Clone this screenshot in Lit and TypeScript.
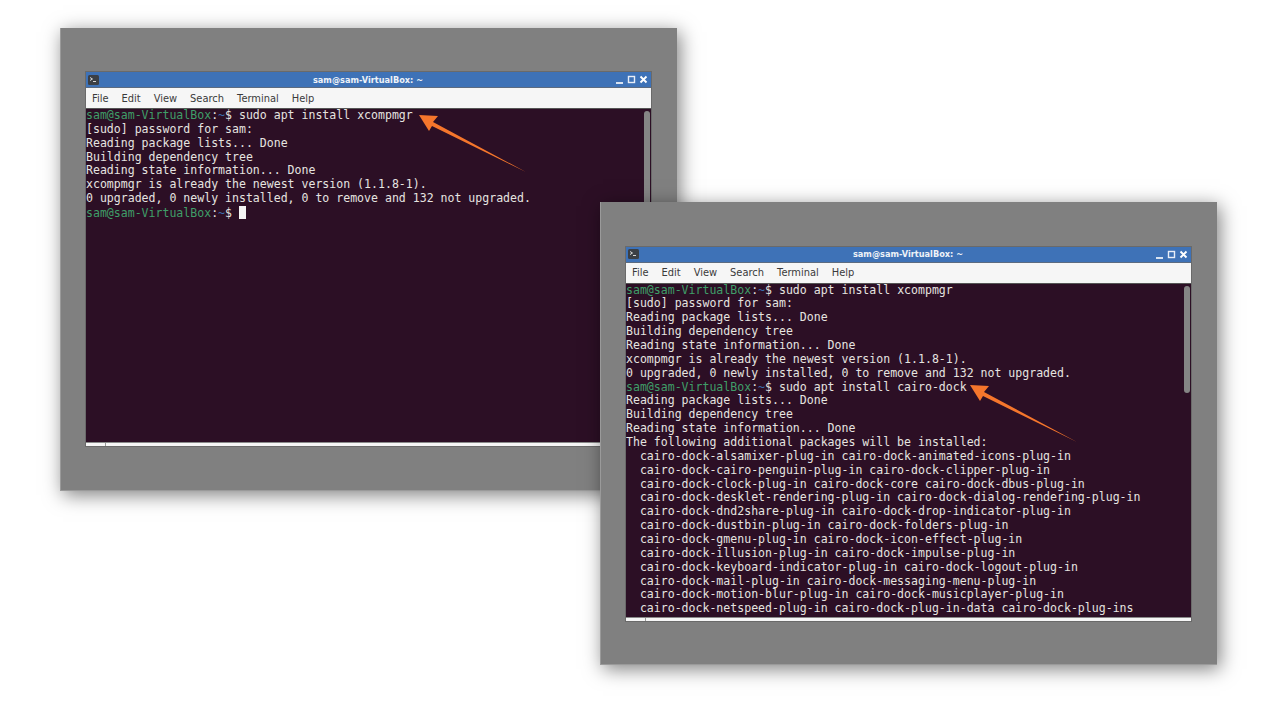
import { LitElement, html, css, svg } from "lit";
import { customElement, property } from "lit/decorators.js";

type Line = string | { cmd: string };

const LEFT: Line[] = [
  { cmd: "sudo apt install xcompmgr" },
  "[sudo] password for sam:",
  "Reading package lists... Done",
  "Building dependency tree",
  "Reading state information... Done",
  "xcompmgr is already the newest version (1.1.8-1).",
  "0 upgraded, 0 newly installed, 0 to remove and 132 not upgraded.",
  { cmd: "CURSOR" },
];

const RIGHT: Line[] = [
  { cmd: "sudo apt install xcompmgr" },
  "[sudo] password for sam:",
  "Reading package lists... Done",
  "Building dependency tree",
  "Reading state information... Done",
  "xcompmgr is already the newest version (1.1.8-1).",
  "0 upgraded, 0 newly installed, 0 to remove and 132 not upgraded.",
  { cmd: "sudo apt install cairo-dock" },
  "Reading package lists... Done",
  "Building dependency tree",
  "Reading state information... Done",
  "The following additional packages will be installed:",
  "  cairo-dock-alsamixer-plug-in cairo-dock-animated-icons-plug-in",
  "  cairo-dock-cairo-penguin-plug-in cairo-dock-clipper-plug-in",
  "  cairo-dock-clock-plug-in cairo-dock-core cairo-dock-dbus-plug-in",
  "  cairo-dock-desklet-rendering-plug-in cairo-dock-dialog-rendering-plug-in",
  "  cairo-dock-dnd2share-plug-in cairo-dock-drop-indicator-plug-in",
  "  cairo-dock-dustbin-plug-in cairo-dock-folders-plug-in",
  "  cairo-dock-gmenu-plug-in cairo-dock-icon-effect-plug-in",
  "  cairo-dock-illusion-plug-in cairo-dock-impulse-plug-in",
  "  cairo-dock-keyboard-indicator-plug-in cairo-dock-logout-plug-in",
  "  cairo-dock-mail-plug-in cairo-dock-messaging-menu-plug-in",
  "  cairo-dock-motion-blur-plug-in cairo-dock-musicplayer-plug-in",
  "  cairo-dock-netspeed-plug-in cairo-dock-plug-in-data cairo-dock-plug-ins",
];

const MENU = ["File", "Edit", "View", "Search", "Terminal", "Help"];

@customElement("term-window")
class TermWindow extends LitElement {
  @property({ attribute: false }) lines: Line[] = [];
  @property({ type: Number }) thumb = 100;

  static styles = css`
    :host {
      display: flex;
      flex-direction: column;
      width: 567px;
      height: 376px;
      box-sizing: border-box;
      border: 1px solid #6a6a6a;
      background: #f6f6f6;
    }
    .title {
      height: 15px;
      display: grid;
      grid-template-columns: 1fr auto 1fr;
      align-items: center;
      padding: 0 3px 0 2px;
      background: #3e72b7;
      color: #eef2f8;
      font: bold 8.2px "DejaVu Sans", sans-serif;
      border-bottom: 1px solid #5c6b80;
    }
    .title svg {
      display: block;
    }
    .controls {
      display: flex;
      gap: 3px;
      justify-content: flex-end;
    }
    .menu {
      height: 20px;
      display: flex;
      align-items: center;
      padding-left: 6px;
      gap: 13px;
      background: #f6f6f6;
      color: #3a3a3a;
      font: 9.9px "DejaVu Sans", sans-serif;
      border-bottom: 1px solid #555;
    }
    .term {
      position: relative;
      flex: 1;
      min-height: 0;
      overflow: hidden;
      background: #2c0f25;
      color: #e6e4e0;
      font: 11.55px/13.87px "DejaVu Sans Mono", monospace;
    }
    .line {
      height: 13.87px;
      white-space: pre;
    }
    .user {
      color: #3f9e68;
    }
    .path {
      color: #3a6db0;
    }
    .cursor {
      display: inline-block;
      width: 7px;
      height: 13px;
      background: #f4f4f4;
      vertical-align: -2px;
    }
    .thumb {
      position: absolute;
      top: 2px;
      right: 1px;
      width: 6px;
      border-radius: 3px;
      background: #858585;
    }
    .bottom {
      height: 3px;
      display: flex;
      background: #f6f6f6;
      border-top: 1px solid #8a8a8a;
    }
    .grip {
      width: 19px;
      border-right: 1px solid #9a9a9a;
    }
  `;

  private icon() {
    return html`<svg width="11" height="10" viewBox="0 0 11 10">
      <rect width="11" height="10" rx="1.5" fill="#3b3f45" />
      <path d="M2 2.5 L4.5 4 L2 5.5" stroke="#d8d8d8" stroke-width="1" fill="none" />
      <path d="M5 6.5 H8" stroke="#d8d8d8" stroke-width="1" />
    </svg>`;
  }

  private controls() {
    return html`<div class="controls">
      <svg width="9" height="9" viewBox="0 0 9 9">
        <path d="M1 8 H8" stroke="#fff" stroke-width="1.6" />
      </svg>
      <svg width="9" height="9" viewBox="0 0 9 9">
        <rect x="1.5" y="1.5" width="6" height="6" stroke="#e8eef8" stroke-width="1.4" fill="none" />
      </svg>
      <svg width="9" height="9" viewBox="0 0 9 9">
        <path d="M1.5 1.5 L7.5 7.5 M7.5 1.5 L1.5 7.5" stroke="#fff" stroke-width="1.9" />
      </svg>
    </div>`;
  }

  private line(l: Line) {
    if (typeof l === "string") return html`<div class="line">${l}</div>`;
    const cursor = l.cmd === "CURSOR";
    return html`<div class="line"><span class="user">sam@sam-VirtualBox</span>:<span class="path">~</span>$ ${cursor
        ? html`<span class="cursor"></span>`
        : l.cmd}</div>`;
  }

  render() {
    return html`
      <div class="title">
        ${this.icon()}
        <div>sam@sam-VirtualBox: ~</div>
        ${this.controls()}
      </div>
      <div class="menu">${MENU.map((m) => html`<span>${m}</span>`)}</div>
      <div class="term">
        ${this.lines.map((l) => this.line(l))}
        <div class="thumb" style="height:${this.thumb}px"></div>
      </div>
      <div class="bottom"><div class="grip"></div></div>
    `;
  }
}

@customElement("app-root")
export class AppRoot extends LitElement {
  static styles = css`
    :host {
      display: block;
      position: relative;
      width: 1280px;
      height: 720px;
      overflow: hidden;
      background: #fff;
    }
    .panel {
      position: absolute;
      width: 617px;
      height: 463px;
      box-sizing: border-box;
      padding: 43px 24px 0 24px;
      background: #808080;
      border-left: 1px solid #9a9a9a;
      border-bottom: 1px solid #9a9a9a;
      box-shadow: 3px 4px 18px rgba(0, 0, 0, 0.5);
    }
    .panel.a {
      left: 60px;
      top: 28px;
    }
    .panel.b {
      left: 600px;
      top: 202px;
      padding-top: 43.5px;
    }
    .arrows {
      position: absolute;
      inset: 0;
      pointer-events: none;
    }
  `;

  private arrow(x: number, y: number) {
    const pts = [
      [419, 115],
      [438, 116],
      [433, 122],
      [526, 172],
      [432, 126],
      [429, 131],
    ]
      .map(([a, b]) => `${a + x},${b + y}`)
      .join(" ");
    return svg`<polygon points=${pts} fill="#f5762c" />`;
  }

  render() {
    return html`
      <div class="panel a"><term-window .lines=${LEFT} .thumb=${330}></term-window></div>
      <div class="panel b"><term-window .lines=${RIGHT} .thumb=${107}></term-window></div>
      <svg class="arrows" width="1280" height="720" viewBox="0 0 1280 720">
        ${this.arrow(0, 0)} ${this.arrow(551, 270)}
      </svg>
    `;
  }
}
